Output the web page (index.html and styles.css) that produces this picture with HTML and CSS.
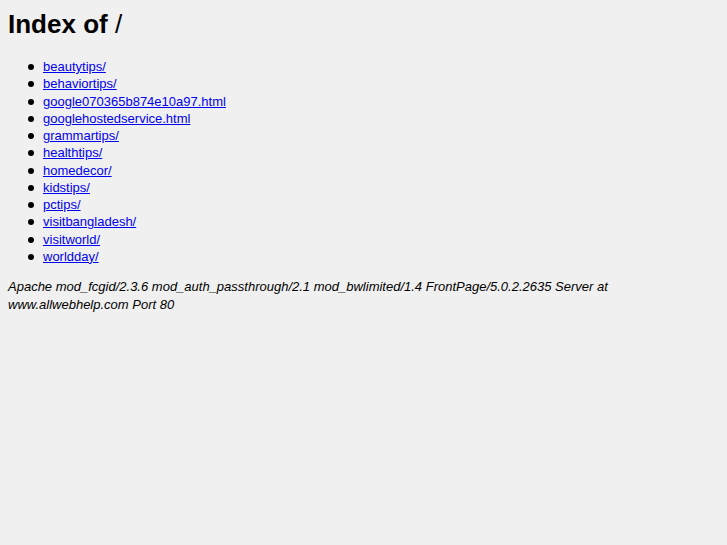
FILE: index.html
```html
<!DOCTYPE html>
<html>
<head>
<meta charset="utf-8">
<title>Index of /</title>
<link rel="stylesheet" href="styles.css">
</head>
<body>
<h1 class="title">Index of <span class="slash">/</span></h1>
<ul class="listing">
<li><a href="#">beautytips/</a></li>
<li><a href="#">behaviortips/</a></li>
<li><a href="#">google070365b874e10a97.html</a></li>
<li><a href="#">googlehostedservice.html</a></li>
<li><a href="#">grammartips/</a></li>
<li><a href="#">healthtips/</a></li>
<li><a href="#">homedecor/</a></li>
<li><a href="#">kidstips/</a></li>
<li><a href="#">pctips/</a></li>
<li><a href="#">visitbangladesh/</a></li>
<li><a href="#">visitworld/</a></li>
<li><a href="#">worldday/</a></li>
</ul>
<address class="server">Apache mod_fcgid/2.3.6 mod_auth_passthrough/2.1 mod_bwlimited/1.4 FrontPage/5.0.2.2635 Server at www.allwebhelp.com Port 80</address>
</body>
</html>
```
FILE: styles.css
```css
html {
  background: #f0f0f0;
}
body {
  margin: 0;
  padding: 8px;
  font-family: "Liberation Sans", Arial, sans-serif;
  font-size: 13px;
  color: #000;
  background: #f0f0f0;
}
.title {
  font-size: 26px;
  font-weight: bold;
  line-height: 30px;
  margin: 1px 0 19px 0;
}
.slash {
  font-weight: normal;
}
.listing {
  margin: 0 0 13px 0;
  padding-left: 35px;
  line-height: 17.27px;
  list-style: none;
}
.listing li {
  position: relative;
}
.listing li::before {
  content: "";
  position: absolute;
  left: -15px;
  top: 6px;
  width: 6px;
  height: 6px;
  border-radius: 50%;
  background: #000;
}
.listing a {
  color: #0000ee;
}
.server {
  font-style: italic;
  line-height: 18px;
  width: 620px;
}
```
